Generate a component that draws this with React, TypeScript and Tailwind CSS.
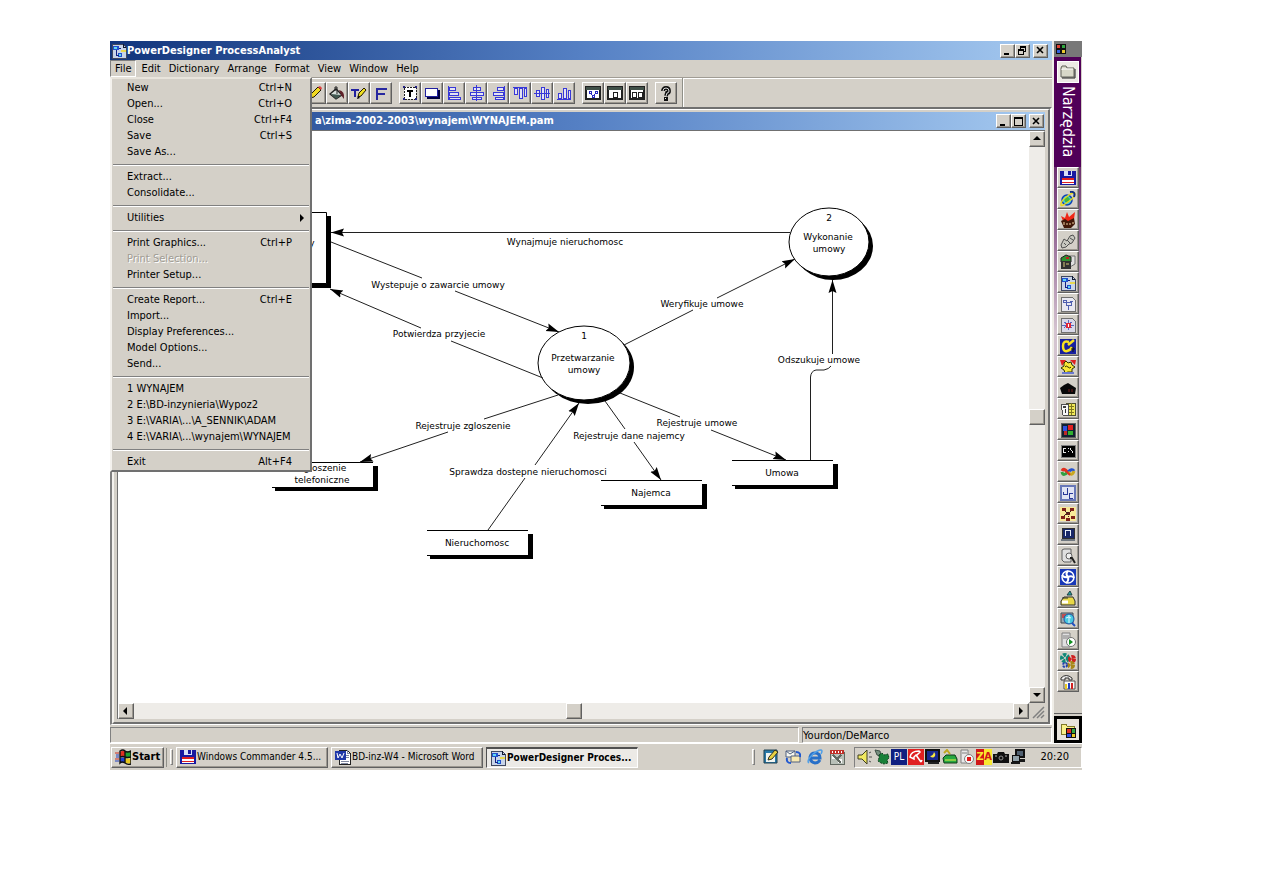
import React from 'react';

const RAISED = 'border border-t-white border-l-white border-r-[#606060] border-b-[#606060] bg-[#d4d0c8] shadow-[inset_-1px_-1px_0_#9c9890]';
const UI_FONT = "font-['DejaVu_Sans_Condensed','DejaVu_Sans',sans-serif]";

const MENUS = ['Edit', 'Dictionary', 'Arrange', 'Format', 'View', 'Window', 'Help'];

type MenuItem = { label: string; keys?: string; disabled?: boolean; sub?: boolean };

const FILE_MENU: MenuItem[][] = [
  [
    { label: 'New', keys: 'Ctrl+N' },
    { label: 'Open...', keys: 'Ctrl+O' },
    { label: 'Close', keys: 'Ctrl+F4' },
    { label: 'Save', keys: 'Ctrl+S' },
    { label: 'Save As...' },
  ],
  [{ label: 'Extract...' }, { label: 'Consolidate...' }],
  [{ label: 'Utilities', sub: true }],
  [
    { label: 'Print Graphics...', keys: 'Ctrl+P' },
    { label: 'Print Selection...', disabled: true },
    { label: 'Printer Setup...' },
  ],
  [
    { label: 'Create Report...', keys: 'Ctrl+E' },
    { label: 'Import...' },
    { label: 'Display Preferences...' },
    { label: 'Model Options...' },
    { label: 'Send...' },
  ],
  [
    { label: '1 WYNAJEM' },
    { label: '2 E:\\BD-inzynieria\\Wypoz2' },
    { label: '3 E:\\VARIA\\...\\A_SENNIK\\ADAM' },
    { label: '4 E:\\VARIA\\...\\wynajem\\WYNAJEM' },
  ],
  [{ label: 'Exit', keys: 'Alt+F4' }],
];

function Icon({ children, smooth }: { children: React.ReactNode; smooth?: boolean }) {
  return (
    <svg
      viewBox="0 0 16 16"
      className="block h-4 w-4 shrink-0"
      fill="none"
      shapeRendering={smooth ? 'auto' : 'crispEdges'}
      aria-hidden="true"
    >
      {children}
    </svg>
  );
}

/* ---------- application icons ---------- */

const AppIcon = () => (
  <Icon>
    <path d="M1 1h11l3 3v11H1z" fill="#c8d4e8" stroke="#404860" />
    <path d="M12 1v3h3" stroke="#101830" />
    <path d="M2 3h6v4H2zM7 10h4v4H7z" fill="#2050d0" />
    <path d="M3 4h3v2H3zM8 11h2v2H8z" fill="#60d8f0" />
    <path d="M5 7v5h3M8 5h2" stroke="#102080" />
    <path d="M10 7h5v2h-5z" fill="#e8d850" />
  </Icon>
);

const FloppyIcon = () => (
  <Icon>
    <path d="M0 1h16v14H0z" fill="#1818a0" />
    <path d="M4 1h8v5H4z" fill="#d8e0f8" />
    <path d="M8 1h3v4H8z" fill="#1818a0" />
    <path d="M2 8h12v6H2z" fill="#fff" />
    <path d="M2 8h12v2H2zM2 12h12v1H2z" fill="#e02020" />
  </Icon>
);

const WordIcon = () => (
  <Icon>
    <path d="M4 1h8l3 3v11H4z" fill="#fff" stroke="#202020" />
    <path d="M12 1v3h3M10 6h4M10 8h4M6 12h8M6 14h7" stroke="#8088a0" />
    <path d="M0 2h11v9H0z" fill="#2038a8" />
    <path d="M2 4l1 5 2-4 2 4 2-5" stroke="#fff" shapeRendering="auto" />
  </Icon>
);

const WindowsFlag = () => (
  <Icon smooth>
    <path d="M5 3q3-2 5-1v6q-3-1-5 0z" fill="#e03020" />
    <path d="M10 2q3 1 6 0v6q-3 1-6 0z" fill="#20a030" />
    <path d="M5 9q3-1 5 0v5q-3-1-5 0z" fill="#2040d0" />
    <path d="M10 9q3 1 6 0v5q-3 1-6 0z" fill="#e8c820" />
    <path d="M5 2q3-2 5 0t6 0v13q-3 1-6-1t-5 0zM10 2v12M5 8q3-1 5 0t6 0" stroke="#101010" strokeWidth="1.4" />
    <path d="M0 4h4M0 10h4" stroke="#d03020" />
    <path d="M1 6h3M1 8h3M0 12h4" stroke="#2040c0" />
  </Icon>
);

/* ---------- drawing toolbar icons ---------- */

const BLUE = '#3838d8';

const AlignIcon = ({ d, axis }: { d: string; axis?: string }) => (
  <Icon>
    <path d={d} fill="#e4e4f4" stroke={BLUE} />
    {axis && <path d={axis} stroke={BLUE} />}
  </Icon>
);

const PanelFrame = ({ children }: { children?: React.ReactNode }) => (
  <Icon>
    <path d="M1 2h14v12H1z" fill="#fff" stroke="#202020" strokeWidth="1.500" />
    <path d="M1 2h14v3H1z" fill="#405048" />
    {children}
  </Icon>
);

const TOOL_GROUPS: { name: string; icon: React.ReactNode }[][] = [
  [
    {
      name: 'Line color',
      icon: (
        <Icon smooth>
          <path d="M3 13l1-4 7-7 3 3-7 7z" fill="#f0d820" stroke="#201800" />
          <path d="M11 2l3 3 1-2-2-2z" fill="#e04040" />
          <path d="M2 14l1-3 2 2z" fill="#000" />
        </Icon>
      ),
    },
    {
      name: 'Fill color',
      icon: (
        <Icon smooth>
          <path d="M1 9l6-5 6 6-6 4z" fill="#d8e0dc" stroke="#202020" strokeWidth="1.4" />
          <path d="M8 9V2H6v4" stroke="#202020" />
          <path d="M2 9l10 1-5 4z" fill="#405850" />
          <path d="M10 5q6 1 5 9l-3-4z" fill="#602028" />
        </Icon>
      ),
    },
    {
      name: 'Text color',
      icon: (
        <Icon smooth>
          <path d="M0 5h8M4 5v7" stroke="#2020a0" strokeWidth="2" />
          <path d="M7 12l1-4 5-5 2 2-5 6z" fill="#f0e020" stroke="#201800" />
          <path d="M6 14l1-3 2 2z" fill="#000" />
        </Icon>
      ),
    },
    { name: 'Font', icon: <Icon><path d="M3 3h11v2H5v3h7v2H5v5H3z" fill="#2828a0" /></Icon> },
  ],
  [
    {
      name: 'Text frame',
      icon: (
        <Icon>
          <path d="M2 2h12v12H2z" fill="#fff" stroke="#202020" strokeDasharray="2 1" />
          <path d="M1 1h2v2H1zM13 1h2v2h-2zM1 13h2v2H1zM13 13h2v2h-2z" fill="#202080" />
          <path d="M5 5h6v2H9v5H7V7H5z" fill="#000" />
        </Icon>
      ),
    },
    {
      name: 'Shadow',
      icon: (
        <Icon>
          <path d="M3 5h13v9H3z" fill="#000040" />
          <path d="M1 3h12v8H1z" fill="#fff" stroke="#2020a0" />
        </Icon>
      ),
    },
    { name: 'Align left', icon: <AlignIcon d="M3 2h6v3H3zM3 7h9v3H3zM3 12h11v2H3z" axis="M2 1v14" /> },
    { name: 'Align center', icon: <AlignIcon d="M5 2h7v3H5zM2 7h13v3H2zM4 12h9v2H4z" axis="M8 0v16" /> },
    { name: 'Align right', icon: <AlignIcon d="M7 2h6v3H7zM3 7h10v3H3zM5 12h8v2H5z" axis="M14 1v14" /> },
    { name: 'Align top', icon: <AlignIcon d="M2 3h3v6H2zM7 3h3v10H7zM12 3h2v8h-2z" axis="M1 2h14" /> },
    { name: 'Align middle', icon: <AlignIcon d="M2 5h3v6H2zM7 2h3v12H7zM12 4h2v8h-2z" axis="M0 8h16" /> },
    { name: 'Align bottom', icon: <AlignIcon d="M2 8h3v5H2zM7 3h3v10H7zM12 5h2v8h-2z" axis="M1 14h14" /> },
  ],
  [
    {
      name: 'Symbols',
      icon: (
        <PanelFrame>
          <path d="M4 6h2v2H4zM10 6h2v2h-2zM7 10h2v2H7zM5 8l3 3 3-3" stroke="#2828c0" />
        </PanelFrame>
      ),
    },
    { name: 'Page', icon: <PanelFrame><path d="M6 7h4v5H6z" stroke="#202020" /></PanelFrame> },
    { name: 'Pages', icon: <PanelFrame><path d="M3 7h4v5H3zM9 7h4v5H9z" stroke="#202020" /></PanelFrame> },
  ],
  [
    {
      name: 'Help',
      icon: (
        <Icon smooth>
          <path d="M5 6q0-3 3-3t3 3q0 2-2 2l-1 3" stroke="#101010" strokeWidth="3.800" />
          <path d="M5 6q0-3 3-3t3 3q0 2-2 2l-1 3" stroke="#d8d8d8" />
          <path d="M6 12h4v4H6z" fill="#101010" />
          <path d="M7 13h1v1H7z" fill="#e8e8e8" />
        </Icon>
      ),
    },
  ],
];

/* ---------- shortcut bar icons ---------- */

const SHORTCUTS: { name: string; icon: React.ReactNode }[] = [
  { name: 'Commander', icon: <FloppyIcon /> },
  {
    name: 'Browser',
    icon: (
      <Icon smooth>
        <circle cx="7" cy="9" r="5" fill="#40c8e0" stroke="#1040b0" strokeWidth="1.500" />
        <path d="M4 8l3-3 3 3-2 4-3-1z" fill="#40b840" />
        <path d="M1 14Q0 10 9 4q6-4 6-1t-7 8-7 3z" stroke="#e8d820" strokeWidth="1.500" />
        <path d="M10 1q6-1 4 5" stroke="#103080" strokeWidth="2" />
      </Icon>
    ),
  },
  {
    name: 'Butterfly',
    icon: (
      <Icon smooth>
        <path d="M1 4l4 2 2-6 2 5 6-5-1 7-5 3-6-1z" fill="#f02818" />
        <path d="M1 9l4-2 3 2 6-3 1 6-4 4H4z" fill="#401808" />
        <path d="M4 10v3M7 11v2M10 11v2M13 10v2" stroke="#f0d0a0" />
      </Icon>
    ),
  },
  {
    name: 'Clips',
    icon: (
      <Icon smooth>
        <path d="M1 12l3-6 3 2 3-5 3-1 2 3-3 5-3 1-3 3-4 1z" fill="#c8c8c0" stroke="#505050" />
        <path d="M4 10l2 2M7 7l3 3M10 5l3 2" stroke="#505050" />
      </Icon>
    ),
  },
  {
    name: 'Archive',
    icon: (
      <Icon smooth>
        <path d="M9 2h6v8l-5 3z" fill="#e0e0e0" stroke="#707070" />
        <path d="M1 4l5-3 5 2v5H1z" fill="#309030" stroke="#202020" />
        <path d="M1 7h10v8H1z" fill="#303030" />
        <path d="M4 8v5M6 10h3" stroke="#d8c878" />
        <path d="M6 3h3v2H6z" fill="#c02020" />
      </Icon>
    ),
  },
  { name: 'ProcessAnalyst', icon: <AppIcon /> },
  {
    name: 'DataArchitect',
    icon: (
      <Icon>
        <path d="M1 1h11l3 3v11H1z" fill="#e8e8f0" stroke="#707070" />
        <path d="M3 4h3v2H3zM6 6h5v3H6zM10 5h3M8 9v5" stroke="#5060b0" />
      </Icon>
    ),
  },
  {
    name: 'AppModeler',
    icon: (
      <Icon>
        <path d="M1 1h11l3 3v11H1z" fill="#d8d8e8" stroke="#707070" />
        <path d="M2 8h12M8 3v10M4 5l8 6M12 5l-8 6" stroke="#5868c0" />
        <path d="M6 6h5v5H6z" fill="#e02838" />
        <path d="M8 7h1v3H8z" fill="#fff" />
      </Icon>
    ),
  },
  {
    name: 'Painter',
    icon: (
      <Icon smooth>
        <path d="M0 1h16v15H0z" fill="#1820a0" />
        <path d="M9 4Q3 2 3 8t4 5 5-4M8 7l6-5" stroke="#f8e020" strokeWidth="2.500" />
        <path d="M11 11h4M13 9v5" stroke="#101010" />
      </Icon>
    ),
  },
  {
    name: 'Cog',
    icon: (
      <Icon smooth>
        <path d="M0 1h6l-4 6zM16 1h-6l5 5z" fill="#e02020" />
        <path d="M4 4l2-2 2 2 3-1 1 3 3 2-3 2v3H8l-3 1-1-3-3-2 3-2z" fill="#f8e838" stroke="#303000" />
        <path d="M5 8q1-2 3 0t3 0" stroke="#303000" />
        <path d="M2 13h12v2H2z" fill="#6878d0" />
      </Icon>
    ),
  },
  {
    name: 'Camera',
    icon: (
      <Icon smooth>
        <path d="M0 8l4-3 4-2 8 5-1 6H2z" fill="#080808" />
        <path d="M9 9v3M12 9v3" stroke="#782020" />
      </Icon>
    ),
  },
  {
    name: 'Planner',
    icon: (
      <Icon>
        <path d="M6 2h9v12H6z" fill="#f0e858" stroke="#505030" />
        <path d="M8 5h6M8 8h6M8 11h6M11 2v12" stroke="#807820" />
        <path d="M1 3h7v11H3z" fill="#f8f8f8" stroke="#505050" />
        <path d="M3 5h3v2H3z" fill="#404040" />
        <path d="M5 8v4" stroke="#303030" />
      </Icon>
    ),
  },
  {
    name: 'Screen',
    icon: (
      <Icon>
        <path d="M1 1h14v14H1z" fill="#102030" stroke="#606060" />
        <path d="M8 3h5v5H8z" fill="#e02020" />
        <path d="M8 9h5v4H8z" fill="#30b030" />
        <path d="M3 4h4v5H3z" fill="#3050e0" />
        <path d="M4 9h3v4H4z" fill="#c02828" />
      </Icon>
    ),
  },
  {
    name: 'Console',
    icon: (
      <Icon>
        <path d="M1 2h14v12H1z" fill="#000" stroke="#808080" />
        <path d="M6 5H3v4h3M8 5v1M8 8v1M10 5l3 5" stroke="#e8e8e8" />
      </Icon>
    ),
  },
  {
    name: 'Studio',
    icon: (
      <Icon smooth>
        <path d="M8 9Q4 3 2 7" stroke="#e03020" strokeWidth="3" />
        <path d="M8 8q4-4 6-1" stroke="#2050d0" strokeWidth="3" />
        <path d="M2 8q1 5 6 0" stroke="#30a040" strokeWidth="3" />
        <path d="M8 8q4 5 6-1" stroke="#c8a820" strokeWidth="3" />
        <path d="M5 6l5 5" stroke="#e03020" strokeWidth="2" />
      </Icon>
    ),
  },
  {
    name: 'JC',
    icon: (
      <Icon>
        <path d="M1 1h14v14H1z" fill="#e0e4f4" stroke="#6878b8" strokeWidth="1.500" />
        <path d="M7 3v6H3V7M13 8H9v5h4" stroke="#283898" />
      </Icon>
    ),
  },
  {
    name: 'Tree',
    icon: (
      <Icon>
        <path d="M0 1h16v14H0z" fill="#f8e898" />
        <path d="M2 2h4v3H2zM10 2h4v3h-4zM6 6h4v3H6zM1 10h4v3H1zM11 10h4v3h-4zM6 12h4v3H6z" fill="#802018" />
        <path d="M5 5l3 2 3-2M4 10l4-3 4 3M8 8v4" stroke="#402020" strokeDasharray="1 1" />
      </Icon>
    ),
  },
  {
    name: 'Monitor',
    icon: (
      <Icon>
        <path d="M2 1h12v10H2z" fill="#182868" stroke="#303030" />
        <path d="M5 3h6v1H6v5H5zM10 3h1v6h-1z" fill="#e8f0f8" />
        <path d="M1 12h14v2H1z" fill="#707880" />
      </Icon>
    ),
  },
  {
    name: 'Search',
    icon: (
      <Icon smooth>
        <path d="M4 1h7v13H4l-2-2V2z" fill="#e0e0e0" stroke="#606060" />
        <circle cx="9" cy="8" r="3" fill="#f0f0f0" stroke="#606060" />
        <path d="M10 10h2l3 5" stroke="#202020" strokeWidth="2" />
      </Icon>
    ),
  },
  {
    name: 'Fan',
    icon: (
      <Icon smooth>
        <path d="M0 0h16v16H0z" fill="#1838b8" />
        <circle cx="8" cy="8" r="6" stroke="#fff" strokeWidth="1.500" />
        <path d="M8 8Q5 5 8 2M8 8q4-2 6 1M8 8q1 4-2 6M8 8Q4 9 2 6" stroke="#fff" strokeWidth="2" />
      </Icon>
    ),
  },
  {
    name: 'Drive',
    icon: (
      <Icon smooth>
        <path d="M1 11l3-4h9l2 4v4H1z" fill="#e8d848" stroke="#303030" />
        <path d="M7 5l3-4 2 4z" fill="#20a0a0" stroke="#204040" />
        <path d="M2 12h6" stroke="#fff" strokeWidth="3" />
        <path d="M2 8h6" stroke="#303030" />
      </Icon>
    ),
  },
  {
    name: 'Network',
    icon: (
      <Icon smooth>
        <path d="M1 2h12v10H1z" fill="#98a8b0" stroke="#404850" />
        <path d="M2 3h4v4H2z" fill="#c05050" />
        <circle cx="9" cy="8" r="5" fill="#48c8e0" stroke="#2050a0" />
        <path d="M6 7q3-2 5 0M9 4v8" stroke="#e0f8ff" />
        <path d="M12 12l3 3" stroke="#2050c0" strokeWidth="2" />
      </Icon>
    ),
  },
  {
    name: 'Server start',
    icon: (
      <Icon smooth>
        <path d="M2 1h8v14H2z" fill="#e0e0e0" stroke="#808080" />
        <path d="M3 4h6M3 6h6" stroke="#808080" />
        <circle cx="11" cy="10" r="4.500" fill="#fff" stroke="#707070" />
        <path d="M9 7v6l4-3z" fill="#109020" />
      </Icon>
    ),
  },
  {
    name: 'Gears',
    icon: (
      <Icon smooth>
        <circle cx="5" cy="5" r="3" stroke="#108878" strokeWidth="4" strokeDasharray="3 1" />
        <circle cx="12" cy="6" r="2" stroke="#d02020" strokeWidth="4" strokeDasharray="3 1" />
        <circle cx="11" cy="12" r="2" stroke="#a88818" strokeWidth="4" strokeDasharray="3 1" />
        <circle cx="5" cy="12" r="2" stroke="#2040b0" strokeWidth="2" strokeDasharray="2 1" />
      </Icon>
    ),
  },
  {
    name: 'Dialer',
    icon: (
      <Icon smooth>
        <path d="M1 4q5-5 11 0v2H9V4H5v2H1z" fill="#f0f0f0" stroke="#303030" />
        <path d="M4 7h11v8H4z" fill="#f8f8f8" stroke="#505050" />
        <path d="M5 10h2v5H5z" fill="#e8c820" />
        <path d="M8 9h2v6H8z" fill="#2040c0" />
        <path d="M11 9h2v6h-2z" fill="#d02020" />
      </Icon>
    ),
  },
];

const FolderIcon = () => (
  <Icon smooth>
    <path d="M1 4l1-2h4l1 2h7v9H1z" fill="#d8d8c8" stroke="#606058" />
    <path d="M2 6V5h11" stroke="#fff" />
    <path d="M15 5v9H2" stroke="#202020" />
  </Icon>
);

const FolderAppsIcon = () => (
  <Icon>
    <path d="M1 2h5l1 2h7v8H1z" fill="#f8f088" stroke="#807828" />
    <path d="M6 6h10v10H6z" fill="#101010" />
    <path d="M7 7h4v4H7z" fill="#e03020" />
    <path d="M12 7h3v4h-3z" fill="#30a840" />
    <path d="M7 12h4v3H7z" fill="#3050e0" />
    <path d="M12 12h3v3h-3z" fill="#e8c820" />
  </Icon>
);

/* ---------- quick launch and tray ---------- */

const QUICK_LAUNCH: { name: string; icon: React.ReactNode }[] = [
  {
    name: 'Show desktop',
    icon: (
      <Icon smooth>
        <path d="M1 1h13v13H1z" fill="#2878a8" stroke="#204050" />
        <path d="M3 4h9v9H3z" fill="#f0f4f0" />
        <path d="M5 11l1-3 6-7 3 2-6 7z" fill="#e8d040" stroke="#303020" />
      </Icon>
    ),
  },
  {
    name: 'Outlook Express',
    icon: (
      <Icon smooth>
        <path d="M1 2h9v6H1z" fill="#f8f8f0" stroke="#506080" />
        <path d="M1 2l4 3 5-3" stroke="#506080" />
        <path d="M6 7h9v6H6z" fill="#f8e8b0" stroke="#506080" />
        <path d="M11 3q5 0 4 5M6 14q-5 0-4-5" stroke="#2058d0" strokeWidth="2" />
      </Icon>
    ),
  },
  {
    name: 'Internet Explorer',
    icon: (
      <Icon smooth>
        <path d="M13 11q-2 3-5 3-5-1-5-6 1-4 5-4 5 0 5 5H4" stroke="#2870c8" strokeWidth="3" />
        <path d="M2 14Q-1 12 6 5q8-6 9-3 0 1-1 3" stroke="#50a0e8" strokeWidth="1.500" />
      </Icon>
    ),
  },
  {
    name: 'Organizer',
    icon: (
      <Icon>
        <path d="M1 3h14v12H1z" fill="#b8c0b8" stroke="#606860" />
        <path d="M1 1h14v4H1z" fill="#c03028" />
        <path d="M3 2v2M6 2v2M9 2v2M12 2v2" stroke="#fff" />
        <path d="M3 7h4v3H3zM9 10h4v4H9z" fill="#f8f8f8" />
        <path d="M4 6l8 8M12 6l-5 5" stroke="#606860" strokeWidth="2" />
      </Icon>
    ),
  },
];

const TRAY: { name: string; icon: React.ReactNode }[] = [
  {
    name: 'Volume',
    icon: (
      <Icon smooth>
        <path d="M1 6h4l5-5v14l-5-5H1z" fill="#f0e860" stroke="#404020" />
        <path d="M12 4l2-1M12 8h3M12 12l2 1" stroke="#505050" />
      </Icon>
    ),
  },
  {
    name: 'Modem',
    icon: (
      <Icon smooth>
        <path d="M1 1l5 1 1 5-4-1z" fill="#789080" stroke="#405048" />
        <path d="M5 6l3-2 2 2 4-1 1 4-2 2 1 3-4 1-3-1-3-2 1-3z" fill="#188038" stroke="#104020" strokeDasharray="2 1" />
      </Icon>
    ),
  },
  {
    name: 'Keyboard layout',
    icon: <span className="flex h-4 w-4 items-center justify-center bg-[#102080] text-[10px] leading-4 text-white">PL</span>,
  },
  {
    name: 'Antivirus',
    icon: (
      <Icon smooth>
        <path d="M0 0h16v16H0z" fill="#e02020" />
        <path d="M2 8Q3 2 11 2l1 1-3 3-1 0-2 2v2zM8 6l5 7M13 13l1-2" stroke="#fff" strokeWidth="1.500" />
      </Icon>
    ),
  },
  {
    name: 'Display',
    icon: (
      <Icon smooth>
        <path d="M1 1h13v11H1z" fill="#182890" stroke="#101010" strokeWidth="2" />
        <path d="M9 3q-1 4-4 4 3 3 5 0 1-2-1-4z" fill="#f8e840" />
        <path d="M3 14h11" stroke="#202020" strokeWidth="2" />
      </Icon>
    ),
  },
  {
    name: 'Scanner',
    icon: (
      <Icon smooth>
        <path d="M1 9l3-3h9l2 4v4H2z" fill="#28a840" stroke="#103818" />
        <path d="M2 4l3-3 3 4" stroke="#c0a820" strokeWidth="2" />
        <path d="M3 11h11" stroke="#e8f048" />
      </Icon>
    ),
  },
  {
    name: 'Server',
    icon: (
      <Icon smooth>
        <path d="M2 1h7v13H2z" fill="#e8e8e8" stroke="#808080" />
        <path d="M3 4h5" stroke="#808080" />
        <circle cx="10" cy="10" r="4.500" fill="#f8f8f8" stroke="#808080" />
        <path d="M8 8h4v4H8z" fill="#e01818" />
      </Icon>
    ),
  },
  {
    name: 'ZoneAlarm',
    icon: (
      <span className="flex h-4 w-4 text-[11px] leading-4 font-bold">
        <span className="w-2 bg-[#d01818] text-center text-[#f8e830]">Z</span>
        <span className="w-2 bg-[#f8e830] text-center text-[#d01818]">A</span>
      </span>
    ),
  },
  {
    name: 'Camera',
    icon: (
      <Icon smooth>
        <path d="M0 5h4l1-2h6l1 2h4v9H0z" fill="#101010" />
        <circle cx="8" cy="9" r="2" stroke="#909090" />
        <path d="M2 7h2M12 7h2" stroke="#b0b0b0" />
      </Icon>
    ),
  },
  {
    name: 'Network',
    icon: (
      <Icon>
        <path d="M6 1h8v7H6z" fill="#506070" stroke="#101010" strokeWidth="2" />
        <path d="M2 6h7v6H2z" fill="#90a0a8" stroke="#101010" />
        <path d="M1 13h9v2H1zM10 10h5v3h-5z" fill="#181818" />
      </Icon>
    ),
  },
];

/* ---------- window chrome ---------- */

function CaptionButton({ kind }: { kind: 'Minimize' | 'Restore' | 'Maximize' | 'Close' }) {
  return (
    <button aria-label={kind} className={`flex h-[14px] w-[15px] items-center justify-center ${RAISED} ${kind === 'Close' ? 'ml-[3px]' : ''}`}>
      <svg viewBox="0 0 9 9" className="h-[9px] w-[9px]" fill="none" stroke="#000" aria-hidden="true" shapeRendering={kind === 'Close' ? 'auto' : 'crispEdges'}>
        {kind === 'Minimize' && <path d="M1 7h5v2H1z" fill="#000" stroke="none" />}
        {kind === 'Maximize' && <path d="M0 0h9v9H0V2h1v6h7V2H0z" fill="#000" stroke="none" />}
        {kind === 'Restore' && (
          <path d="M2 0h6v6H6V5h1V2H3v1H2zM0 3h6v6H0zM1 5v3h4V5z" fill="#000" fillRule="evenodd" stroke="none" />
        )}
        {kind === 'Close' && <path d="M1 1l6 6M7 1L1 7" strokeWidth="1.600" />}
      </svg>
    </button>
  );
}

function ScrollButton({ dir }: { dir: 'up' | 'down' | 'left' | 'right' }) {
  const arrows = {
    up: 'M0 5l4-4 4 4z',
    down: 'M0 2h8L4 6z',
    left: 'M5 0v8L1 4z',
    right: 'M2 0v8l4-4z',
  };
  return (
    <button aria-label={`Scroll ${dir}`} className={`flex h-4 w-4 shrink-0 items-center justify-center ${RAISED}`}>
      <svg viewBox="0 0 8 8" className="h-2 w-2" aria-hidden="true">
        <path d={arrows[dir]} />
      </svg>
    </button>
  );
}

function FileMenu() {
  return (
    <div
      role="menu"
      className="absolute top-full left-0 z-20 w-[202px] border-2 border-t-[#e8e4dc] border-l-[#f4f2ee] border-r-[#707070] border-b-[#707070] bg-[#d4d0c8] pt-px"
    >
      {FILE_MENU.map((group, i) => (
        <React.Fragment key={group[0].label}>
          {i > 0 && (
            <div className="flex h-[9px] items-center px-px">
              <hr className="h-[2px] w-full border-0 border-t border-b border-t-[#808080] border-b-white" />
            </div>
          )}
          {group.map((item) => (
            <button
              key={item.label}
              role="menuitem"
              disabled={item.disabled}
              className="flex h-4 w-full items-center justify-between pr-[18px] pl-[15px] text-left whitespace-nowrap disabled:text-[#a09c94] disabled:[text-shadow:1px_1px_0_#fff]"
            >
              <span>{item.label}</span>
              {item.keys && <span>{item.keys}</span>}
              {item.sub && (
                <svg viewBox="0 0 4 8" className="-mr-3 h-2 w-1" aria-hidden="true">
                  <path d="M0 0l4 4-4 4z" />
                </svg>
              )}
            </button>
          ))}
        </React.Fragment>
      ))}
    </div>
  );
}

/* ---------- data flow diagram ---------- */

const STORES = [
  { x: 272, y: 462, lines: ['Zgloszenie', 'telefoniczne'] },
  { x: 427, y: 530, lines: ['Nieruchomosc'] },
  { x: 601, y: 480, lines: ['Najemca'] },
  { x: 732, y: 460, lines: ['Umowa'] },
];

const PROCESSES = [
  { no: '1', cx: 584, cy: 363, rx: 46, ry: 37, lines: ['Przetwarzanie', 'umowy'] },
  { no: '2', cx: 829, cy: 242, rx: 40, ry: 34, lines: ['Wykonanie', 'umowy'] },
];

// tail runs up to the label, head carries on from it to the target
const FLOWS = [
  { label: 'Wynajmuje nieruchomosc', x: 565, y: 245, tail: '', head: 'M790 232.500H331' },
  { label: 'Wystepuje o zawarcie umowy', x: 438, y: 288, tail: 'M331 242L422 278', head: 'M455 291L559 332' },
  { label: 'Potwierdza przyjecie', x: 439, y: 337, tail: 'M543 378L451 341', head: 'M421 328L330 289' },
  { label: 'Weryfikuje umowe', x: 702, y: 307, tail: 'M624 345L693 310', head: 'M717 298L795 259' },
  { label: 'Odszukuje umowe', x: 819, y: 363, tail: 'M810.500 460V377Q811 371 816 370H824Q829 369 831 366', head: 'M832.500 354V280' },
  { label: 'Rejestruje zgloszenie', x: 463, y: 429, tail: 'M558 395L484 419', head: 'M448 432L360 462' },
  { label: 'Sprawdza dostepne nieruchomosci', x: 528, y: 475, tail: 'M488 530L525 478', head: 'M535 465L579 403' },
  { label: 'Rejestruje dane najemcy', x: 629, y: 439, tail: 'M605 401L625 429', head: 'M634 442L661 480' },
  { label: 'Rejestruje umowe', x: 697, y: 426, tail: 'M620 393L680 417', head: 'M711 430L786 460' },
];

function Diagram() {
  return (
    <svg
      role="img"
      aria-label="Data flow diagram"
      className="absolute inset-0 h-full w-full font-['DejaVu_Sans',sans-serif] text-[9px]"
    >
      <defs>
        <marker id="arrow" markerUnits="userSpaceOnUse" markerWidth="14" markerHeight="10" refX="13" refY="5" orient="auto">
          <path d="M13 5L0 1l2 4-2 4z" />
        </marker>
      </defs>
      <g transform="translate(-118 -131)" textAnchor="middle">
        <path d="M240 216h91v72h-91z" />
        <path d="M236.500 212.500h90v71h-90z" fill="#fff" stroke="#000" />
        <text x="312" y="246">y</text>

        {PROCESSES.map((p) => (
          <g key={p.no}>
            <ellipse cx={p.cx + 4} cy={p.cy + 4} rx={p.rx} ry={p.ry} />
            <ellipse cx={p.cx} cy={p.cy} rx={p.rx} ry={p.ry} fill="#fff" stroke="#000" />
            <text x={p.cx} y={p.cy - p.ry + 13}>{p.no}</text>
            <text x={p.cx - 1} y={p.cy - 2}>{p.lines[0]}</text>
            <text x={p.cx} y={p.cy + 10}>{p.lines[1]}</text>
          </g>
        ))}

        {STORES.map((s) => (
          <g key={s.lines[0]}>
            <path d={`M${s.x + 3} ${s.y + 4}h103v25h-103z`} />
            <path d={`M${s.x} ${s.y}h101v25h-101z`} fill="#fff" />
            <path d={`M${s.x} ${s.y}h101M${s.x} ${s.y + 25}h101`} stroke="#000" shapeRendering="crispEdges" />
            {s.lines.map((line, i) => (
              <text key={line} x={s.x + 50} y={s.lines.length > 1 ? s.y + 9 + i * 12 : s.y + 16}>
                {line}
              </text>
            ))}
          </g>
        ))}

        {FLOWS.map((f) => (
          <g key={f.label}>
            {f.tail && <path d={f.tail} fill="none" stroke="#202020" />}
            <path d={f.head} fill="none" stroke="#202020" markerEnd="url(#arrow)" />
            <text x={f.x} y={f.y}>{f.label}</text>
          </g>
        ))}
      </g>
    </svg>
  );
}

function DocumentWindow() {
  return (
    <section className="flex min-h-0 flex-1 border-2 border-b border-t-[#707070] border-l-[#808080] border-r-white border-b-white">
      <div className="flex min-w-0 flex-1 flex-col border-t border-r-2 border-b-2 border-l-2 border-t-white border-r-[#707070] border-b-[#707070] border-l-[#f4f2ee] px-[3px] pt-[2px] pb-[3px]">
        <div className="flex h-[18px] items-center justify-end bg-linear-to-r from-[#1b3f87] via-[#5580c4] to-[#a6caf0] pr-px pl-1">
          <h2 className="flex-1 pl-[194px] text-[11px] font-bold whitespace-nowrap text-white">a\zima-2002-2003\wynajem\WYNAJEM.pam</h2>
          <CaptionButton kind="Minimize" />
          <CaptionButton kind="Maximize" />
          <CaptionButton kind="Close" />
        </div>
        <div className="flex min-h-0 flex-1 border-t border-l border-[#707070]">
          <div className="flex min-w-0 flex-1 flex-col">
            <div className="relative min-h-[400px] flex-1 overflow-hidden bg-white">
              <Diagram />
            </div>
            <div className="flex h-4 bg-[#eeece8]">
              <ScrollButton dir="left" />
              <div className="flex flex-1 justify-center">
                <div className={`w-4 ${RAISED}`} />
              </div>
              <ScrollButton dir="right" />
            </div>
          </div>
          <div className="flex w-4 flex-col bg-[#eeece8]">
            <ScrollButton dir="up" />
            <div className="flex flex-1 flex-col justify-center">
              <div className={`h-4 ${RAISED}`} />
            </div>
            <ScrollButton dir="down" />
            <svg viewBox="0 0 16 16" className="h-4 w-4 bg-[#d4d0c8]" aria-hidden="true">
              <path d="M4 15L15 4M8 15l7-7M12 15l3-3" stroke="#808080" strokeWidth="1.500" />
            </svg>
          </div>
        </div>
      </div>
    </section>
  );
}

function ShortcutBar() {
  return (
    <aside className="flex w-[30px] flex-col border-l-2 border-l-[#f0eee8] bg-[#d4d0c8]">
      <div className="flex h-4 items-center bg-[#787878] pl-[2px]">
        <svg viewBox="0 0 10 10" className="h-[10px] w-[10px]" aria-hidden="true">
          <path d="M0 0h10v10H0z" fill="#101010" />
          <path d="M1 1h3v3H1z" fill="#e04030" />
          <path d="M6 1h3v3H6z" fill="#30a840" />
          <path d="M1 6h3v3H1z" fill="#3060e0" />
          <path d="M6 6h3v3H6z" fill="#e8c830" />
        </svg>
      </div>
      <div className="mr-px flex h-[110px] flex-col items-center bg-[#500058] pt-1">
        <button aria-label="Folder" className="flex h-[22px] w-[22px] items-center justify-center border border-white bg-[#eceae4]">
          <FolderIcon />
        </button>
        <span className="mt-[3px] text-[16px] leading-4 text-white [writing-mode:vertical-rl]">Narzędzia</span>
      </div>
      <div className="mr-px flex flex-1 flex-col items-center bg-linear-to-b from-[#6c3070] via-[#d4c4d0] via-30% to-[#d4d0c8]">
        {SHORTCUTS.map((s) => (
          <button key={s.name} aria-label={s.name} className={`flex h-[21px] w-[22px] items-center justify-center ${RAISED}`}>
            {s.icon}
          </button>
        ))}
      </div>
      <div className="border-t border-t-[#606060] pt-[2px]">
        <button aria-label="Applications" className="flex h-[27px] w-full items-center justify-center border-[3px] border-black bg-[#e8e4dc]">
          <FolderAppsIcon />
        </button>
      </div>
    </aside>
  );
}

function TaskButton({ icon, label, active }: { icon: React.ReactNode; label: string; active?: boolean }) {
  return (
    <button
      aria-pressed={active}
      className={`flex h-[21px] w-[152px] items-center gap-px px-[3px] text-[10px] whitespace-nowrap ${
        active
          ? 'border border-t-2 border-t-[#505050] border-l-[#505050] border-r-white border-b-white bg-[#eceae6] font-bold'
          : RAISED
      }`}
    >
      {icon}
      <span>{label}</span>
    </button>
  );
}

function Taskbar() {
  return (
    <footer className="flex h-[27px] items-center border-t border-t-white bg-[#d4d0c8] pl-px">
      <button className={`flex h-[21px] w-[53px] items-center gap-px pl-[3px] font-bold ${RAISED}`}>
        <WindowsFlag />
        Start
      </button>
      <div className="mr-[3px] ml-[2px] h-[19px] w-px bg-[#909088]" />
      <div className="mr-[3px] h-4 w-[3px] border border-t-white border-l-white border-r-[#808080] border-b-[#808080]" />
      <div className="flex gap-[3px]">
        <TaskButton icon={<FloppyIcon />} label="Windows Commander 4.5..." />
        <TaskButton icon={<WordIcon />} label="BD-inz-W4 - Microsoft Word" />
        <TaskButton icon={<AppIcon />} label="PowerDesigner Proces..." active />
      </div>
      <div className="flex flex-1 items-center justify-end gap-[6px] pr-[9px]">
        <div className="mr-[2px] h-4 w-[3px] border border-t-white border-l-white border-r-[#808080] border-b-[#808080]" />
        {QUICK_LAUNCH.map((q) => (
          <button key={q.name} aria-label={q.name}>
            {q.icon}
          </button>
        ))}
      </div>
      <div className="flex h-[21px] w-[228px] items-center border border-t-[#808080] border-l-[#808080] border-r-white border-b-white pr-3 pl-[2px]">
        <div className="flex flex-1 gap-px">
          {TRAY.map((t) => (
            <button key={t.name} aria-label={t.name}>
              {t.icon}
            </button>
          ))}
        </div>
        <time>20:20</time>
      </div>
    </footer>
  );
}

export default function App() {
  return (
    <main className={`flex min-h-screen flex-col bg-white pt-[41px] pr-[181px] pb-[123px] pl-[110px] text-[11px] leading-4 text-black ${UI_FONT}`}>
      <div className="flex flex-1 bg-[#d4d0c8]">
        <div className="flex min-w-0 flex-1 flex-col">
          <header className="flex h-[19px] items-center bg-linear-to-r from-[#12357c] via-[#5580c4] to-[#a6caf0] pr-1 pl-px text-white">
            <AppIcon />
            <h1 className="flex-1 text-[11px] font-bold">PowerDesigner ProcessAnalyst</h1>
            <CaptionButton kind="Minimize" />
            <CaptionButton kind="Restore" />
            <CaptionButton kind="Close" />
          </header>

          <nav className="flex h-[17px] items-center">
            <div className="relative">
              <button className="flex h-[17px] items-center border border-t-[#808080] border-l-[#808080] border-r-white border-b-white px-1">
                File
              </button>
              <FileMenu />
            </div>
            <div className="flex gap-2 pl-[5px]">
              {MENUS.map((m) => (
                <button key={m}>{m}</button>
              ))}
            </div>
          </nav>

          <div className="flex h-[30px] border-t border-t-[#a09c94] shadow-[inset_0_1px_0_#fff]">
            <div className="flex items-center gap-[7px] border-r border-r-[#909088] pr-[5px] pl-[194px]">
              {TOOL_GROUPS.map((group) => (
                <div key={group[0].name} className="flex">
                  {group.map((tool) => (
                    <button key={tool.name} aria-label={tool.name} className={`flex h-[22px] w-[22px] items-center justify-center ${RAISED}`}>
                      {tool.icon}
                    </button>
                  ))}
                </div>
              ))}
            </div>
            <div className="w-px bg-white" />
          </div>

          <DocumentWindow />

          <div className="flex h-[18px] gap-[3px] pt-[2px]">
            <div className="flex-1 border border-t-[#808080] border-l-[#808080] border-r-white border-b-white" />
            <div className="w-[250px] border border-t-[#808080] border-l-[#808080] border-r-white border-b-white leading-[15px]">
              Yourdon/DeMarco
            </div>
          </div>
        </div>
        <ShortcutBar />
      </div>
      <Taskbar />
    </main>
  );
}
